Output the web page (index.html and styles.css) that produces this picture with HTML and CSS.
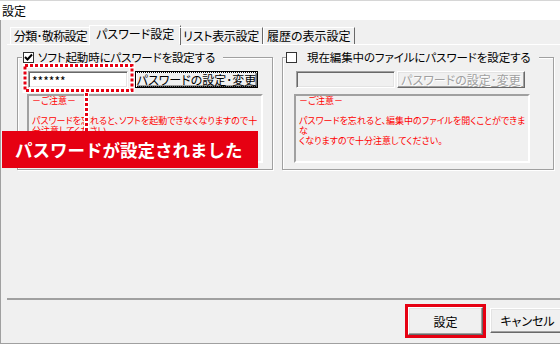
FILE: index.html
```html
<!DOCTYPE html>
<html lang="ja">
<head>
<meta charset="utf-8">
<title>設定</title>
<link rel="stylesheet" href="styles.css">
</head>
<body>
<div class="window">
  <div class="titlebar">設定</div>
  <div class="client">
    <div class="tabs">
      <div class="tab tab-narrow">分類･敬称設定</div>
      <div class="tab active">パスワード設定</div>
      <div class="tab tab-tight">リスト表示設定</div>
      <div class="tab">履歴の表示設定</div>
    </div>
    <div class="panel">
      <section class="group group-left">
        <div class="legend legend-left">
          <span class="check"><svg width="9" height="9" viewBox="0 0 9 9"><path d="M1 4 L3.5 6.5 L8 1.5" fill="none" stroke="#000" stroke-width="2"/></svg></span>
          <span>ソフト起動時にパスワードを設定する</span>
        </div>
        <div class="row row-left">
          <div class="field">******</div>
          <button class="btn default btn-left"><span class="focus-rect">パスワードの設定･変更</span></button>
        </div>
        <div class="notes notes-left">－ご注意－<br><br>パスワードを忘れると、ソフトを起動できなくなりますので十<br>分注意してください。</div>
      </section>
      <section class="group group-right">
        <div class="legend legend-right">
          <span class="check"></span>
          <span>現在編集中のファイルにパスワードを設定する</span>
        </div>
        <div class="row row-right">
          <div class="field disabled-field"></div>
          <button class="btn disabled btn-right">パスワードの設定･変更</button>
        </div>
        <div class="notes notes-right">－ご注意－<br><br>パスワードを忘れると、編集中のファイルを開くことができま<br>な<br>くなりますので十分注意してください。</div>
      </section>
    </div>
    <div class="footer">
      <div class="highlight"><button class="btn btn-ok">設定</button></div>
      <button class="btn btn-cancel">キャンセル</button>
    </div>
  </div>
  <svg class="annotation" width="560" height="344" viewBox="0 0 560 344">
    <g fill="none">
      <rect x="25" y="65.5" width="107" height="25" stroke="#fff" stroke-width="5"/>
      <line x1="86.5" y1="92" x2="86.5" y2="131" stroke="#fff" stroke-width="5"/>
      <rect x="25" y="65.5" width="107" height="25" stroke="#e60012" stroke-width="3" stroke-dasharray="3 2"/>
      <line x1="86.5" y1="93" x2="86.5" y2="131" stroke="#e60012" stroke-width="3" stroke-dasharray="3 2"/>
    </g>
  </svg>
  <div class="banner">パスワードが設定されました</div>
</div>
</body>
</html>
```
FILE: styles.css
```css
html, body {
  margin: 0;
  padding: 0;
}
body {
  width: 560px;
  height: 344px;
  overflow: hidden;
  background: #f0f0f0;
  font-family: "Noto Sans CJK JP", "Noto Sans", sans-serif;
  font-size: 12px;
  color: #000;
}
.window {
  position: relative;
  width: 570px;
  height: 344px;
  box-sizing: border-box;
  border-bottom: 1px solid #a0a0a0;
  display: flex;
  flex-direction: column;
}
.titlebar {
  height: 20px;
  box-sizing: border-box;
  background: #fff;
  border-top: 1px solid #d6d6d6;
  padding-left: 2px;
  line-height: 19px;
  font-feature-settings: "palt";
}
.client {
  flex: 1;
  border-left: 1px solid #a0a0a0;
  padding-top: 7px;
  display: flex;
  flex-direction: column;
}
.tabs {
  display: flex;
  align-items: flex-end;
  margin-left: 9px;
  height: 17px;
  position: relative;
  z-index: 1;
}
.tab {
  height: 17px;
  box-sizing: border-box;
  padding: 0 3px;
  line-height: 15px;
  font-size: 12px;
  border-top: 1px solid #fff;
  border-left: 1px solid #fff;
  border-right: 1px solid #696969;
  white-space: nowrap;
  font-feature-settings: "palt";
}
.tab-narrow { letter-spacing: -0.7px; }
.tab-tight { letter-spacing: -0.3px; }
.tab.active {
  height: 20px;
  margin-bottom: -1px;
  margin-left: -2px;
  margin-right: -2px;
  padding: 0 6px 3px;
  line-height: 16px;
  background: #f0f0f0;
}
.panel {
  margin-left: 6px;
  height: 256px;
  box-sizing: border-box;
  border-top: 1px solid #fff;
  border-bottom: 2px solid #a0a0a0;
  padding: 12px 0 0 10px;
  display: flex;
  gap: 9px;
  align-items: flex-start;
}
.group {
  height: 113px;
  box-sizing: border-box;
  border: 1px solid #a0a0a0;
  box-shadow: inset 1px 1px 0 #fff, 1px 1px 0 #fff;
}
.group-left { width: 256px; }
.group-right { width: 272px; }
.legend {
  display: flex;
  align-items: center;
  width: max-content;
  height: 14px;
  margin-top: -8px;
  background: #f0f0f0;
  padding: 0 8px 0 1px;
  white-space: nowrap;
  font-size: 11.5px;
  font-feature-settings: "palt";
}
.legend-left { margin-left: 4px; gap: 4px; }
.legend-left span:last-child { letter-spacing: -0.15px; }
.legend-right { margin-left: 3px; gap: 10px; padding-left: 0; }
.legend-right span:last-child { letter-spacing: -0.1px; }
.check {
  width: 9px;
  height: 9px;
  border: 1px solid #333;
  background: #fff;
  display: flex;
  align-items: center;
  justify-content: center;
}
.row {
  display: flex;
  margin-top: 7px;
  height: 17px;
}
.row-left { margin-left: 10px; gap: 7px; }
.row-right { margin-left: 13px; gap: 2px; }
.field {
  width: 100px;
  height: 17px;
  box-sizing: border-box;
  border: 1px solid;
  border-color: #a0a0a0 #fff #fff #a0a0a0;
  box-shadow: inset 1px 1px 0 #696969, inset -1px -1px 0 #e3e3e3;
  background: #fff;
  padding-left: 3px;
  line-height: 17px;
  font-size: 12px;
}
.disabled-field { background: #f0f0f0; width: 99px; }
.btn {
  font: inherit;
  font-feature-settings: "palt";
  color: #000;
  background: #f0f0f0;
  padding: 0;
  margin: 0;
  border: 1px solid;
  border-color: #fff #696969 #696969 #fff;
  box-shadow: inset -1px -1px 0 #a0a0a0, inset 1px 1px 0 #e3e3e3;
  box-sizing: border-box;
  display: flex;
  align-items: center;
  justify-content: center;
  white-space: nowrap;
}
.btn.default {
  border-color: #000;
  box-shadow: inset 1px 1px 0 #fff, inset -1px -1px 0 #696969, inset -2px -2px 0 #a0a0a0;
}
.btn-left { width: 123px; height: 17px; }
.btn-right { width: 128px; height: 17px; }
.btn.disabled {
  color: #a0a0a0;
  text-shadow: 1px 1px 0 #fff;
}
.focus-rect {
  outline: 1px dotted #000;
  outline-offset: 0;
  line-height: 13px;
  padding: 0 1px;
}
.notes {
  width: 236px;
  height: 69px;
  box-sizing: border-box;
  margin-top: 6px;
  border: 2px solid;
  border-color: #a0a0a0 #fff #fff #a0a0a0;
  padding: 0 3px;
  color: #ff0000;
  font-size: 9px;
  line-height: 10px;
  font-feature-settings: "palt";
  white-space: nowrap;
  overflow: hidden;
}
.notes-left { margin-left: 9px; }
.notes-right { margin-left: 11px; }
.footer {
  display: flex;
  align-items: flex-start;
  gap: 4px;
  padding: 4px 0 0 404px;
}
.highlight {
  border: 3px solid #e60012;
  display: flex;
}
.btn-ok { width: 75px; height: 28px; }
.btn-cancel { width: 75px; height: 25px; margin-top: 4px; }
.annotation {
  position: absolute;
  left: 0;
  top: 0;
  pointer-events: none;
}
.banner {
  position: absolute;
  left: 2px;
  top: 131px;
  width: 256px;
  height: 37px;
  box-sizing: border-box;
  background: #e60012;
  color: #fff;
  font-weight: bold;
  font-size: 17.5px;
  line-height: 37px;
  padding-left: 13px;
  white-space: nowrap;
}
```
